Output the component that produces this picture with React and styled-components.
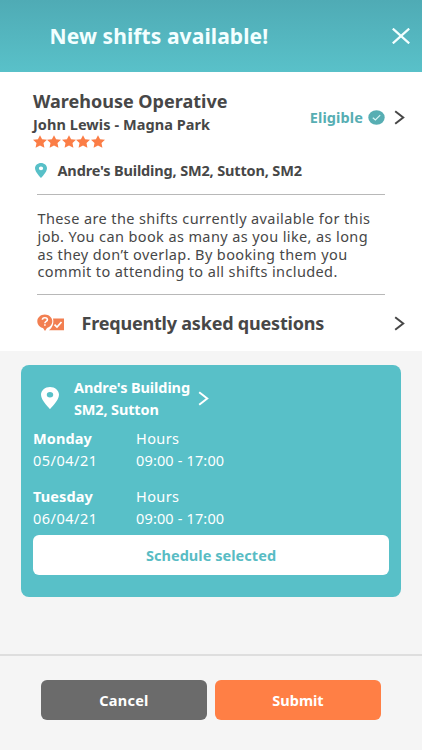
import React from "react";
import styled, { createGlobalStyle } from "styled-components";

const GlobalStyle = createGlobalStyle`
  * {
    box-sizing: border-box;
  }
  body {
    margin: 0;
    background-color: #f5f5f5;
    font-family: "Noto Sans", "Open Sans", sans-serif;
    color: #474747;
  }
`;

const Container = styled.div`
  display: flex;
  flex-direction: column;
  width: 422px;
  height: 750px;
  overflow: hidden;
`;

const Header = styled.header`
  display: flex;
  align-items: center;
  justify-content: space-between;
  height: 72px;
  padding: 0 12px 0 49.5px;
  background: linear-gradient(#4fabb5, #59c1c9);
  color: #f3ffff;
  flex-shrink: 0;
`;

const Text = styled.span`
  display: block;
  font-size: ${({ $size }) => $size || 14.5}px;
  font-weight: ${({ $weight }) => $weight || 700};
  line-height: ${({ $line }) => $line || 22}px;
  letter-spacing: ${({ $spacing }) => $spacing || 0}px;
  color: ${({ $color }) => $color || "inherit"};
  white-space: nowrap;
`;

const Details = styled.section`
  height: 279px;
  padding: 16px 17px 0 33px;
  background-color: white;
  flex-shrink: 0;
`;

const Job = styled.div`
  display: flex;
  align-items: flex-start;
  justify-content: space-between;
  height: 62px;
`;

const Stars = styled.div`
  display: flex;
  gap: 0.4px;
`;

const Status = styled.div`
  display: flex;
  align-items: center;
  padding-top: 18px;
`;

const StatusIcons = styled.div`
  display: flex;
  align-items: center;
  gap: 9px;
  margin-left: 5px;
`;

const Address = styled.div`
  display: flex;
  align-items: center;
  gap: 10.5px;
  height: 22px;
  margin-top: 9px;
  padding-left: 2px;
`;

const Divider = styled.hr`
  width: 348px;
  height: 1px;
  margin: ${({ $top }) => $top}px 0 0 4px;
  border: none;
  background-color: #b8b8b8;
`;

const Description = styled.p`
  width: 342px;
  margin: 15px 0 0 4.5px;
  font-size: 14.5px;
  line-height: 17.8px;
  letter-spacing: 0.39px;
`;

const Faq = styled.div`
  display: flex;
  align-items: center;
  height: 28px;
  margin-top: 14px;
  padding-left: 4px;

  > :last-child {
    margin-left: auto;
  }
`;

const FaqTitle = styled(Text)`
  margin-left: 16.5px;
`;

const Card = styled.section`
  width: 380px;
  height: 232px;
  margin: 14px 0 0 21px;
  padding: 11px 12px 0;
  border-radius: 8px;
  background-color: #58c0c8;
  color: white;
  flex-shrink: 0;
`;

const Place = styled.div`
  display: flex;
  align-items: center;
  height: 44px;
  padding-left: 8px;
`;

const PlaceName = styled.div`
  width: 117px;
  margin: 0 7px 0 15px;
`;

const Shift = styled.div`
  display: grid;
  grid-template-columns: 103px 1fr;
  margin-top: ${({ $top }) => $top}px;
`;

const Button = styled.button`
  display: flex;
  align-items: center;
  justify-content: center;
  width: ${({ $width }) => $width}px;
  height: 40px;
  padding: 0;
  border: none;
  border-radius: 6px;
  background-color: ${({ $bg }) => $bg};
  color: ${({ $color }) => $color || "white"};
  font-family: inherit;
`;

const ScheduleButton = styled(Button)`
  margin-top: 6px;
`;

const Footer = styled.footer`
  display: flex;
  gap: 8px;
  height: 96px;
  margin-top: auto;
  padding: 24px 0 0 41px;
  border-top: 2px solid #dedede;
`;

const Chevron = ({ color = "#474747" }) => (
  <svg width="11" height="15" viewBox="0 0 11 15" fill="none">
    <path d="M1.2 1.3 L9.2 7.5 L1.2 13.7" stroke={color} strokeWidth="2" />
  </svg>
);

const Close = () => (
  <svg width="18" height="16" viewBox="0 0 18 16" fill="none">
    <path d="M0.8 0.6 L17.2 15.4 M17.2 0.6 L0.8 15.4" stroke="#f3ffff" strokeWidth="2.2" />
  </svg>
);

const Star = () => (
  <svg width="14" height="13" viewBox="0 0 14 13">
    <path
      d="M7 0.2 L9.1 4.3 L14 4.8 L10.5 8 L11.4 12.8 L7 10.4 L2.6 12.8 L3.5 8 L0 4.8 L4.9 4.3 Z"
      fill="#fb7d46"
    />
  </svg>
);

const Pin = ({ width, height, color }) => (
  <svg width={width} height={height} viewBox="5 2 14 20" preserveAspectRatio="none">
    <path
      d="M12 2C8.1 2 5 5.1 5 9c0 5.2 7 13 7 13s7-7.8 7-13c0-3.9-3.1-7-7-7zm0 9.5a2.5 2.5 0 1 1 0-5 2.5 2.5 0 0 1 0 5z"
      fill={color}
    />
  </svg>
);

const Check = () => (
  <svg width="17" height="15" viewBox="0 0 17 15" fill="none">
    <ellipse cx="8.5" cy="7.5" rx="8.2" ry="7.3" fill="#57aeb3" />
    <path d="M4.8 7.7 L7.4 10 L12.2 5.2" stroke="#d8f5f5" strokeWidth="1.2" />
  </svg>
);

const FaqIcon = () => (
  <svg width="28" height="18" viewBox="0 0 28 18" fill="none">
    <path d="M16 4.5 H27 V16.3 H12 C15.2 14 17.2 9.5 16 4.5 Z" fill="#f27f51" />
    <path d="M17.5 10.6 L20 13 L24.5 8" stroke="white" strokeWidth="1.7" />
    <path
      d="M7.8 0.6 C3.8 0.6 0.3 3.5 0.3 7.3 C0.3 10.8 3 13.5 6 14 L8 16.9 L10 13.9 C13 13 15.3 10.5 15.3 7.3 C15.3 3.5 11.8 0.6 7.8 0.6 Z"
      fill="#f27f51"
    />
    <path
      d="M5.4 5.8 C5.4 3 10.4 3 10.4 5.8 C10.4 7.4 7.9 7.3 7.9 9.2 M7.9 10.2 V11.8"
      stroke="white"
      strokeWidth="1.6"
    />
  </svg>
);

const shifts = [
  { day: "Monday", date: "05/04/21", hours: "09:00 - 17:00", top: 7 },
  { day: "Tuesday", date: "06/04/21", hours: "09:00 - 17:00", top: 14 },
];

const App = () => {
  return (
    <Container>
      <GlobalStyle />
      <Header>
        <Text $size={21} $line={30} $spacing={0.1}>New shifts available!</Text>
        <Close />
      </Header>
      <Details>
        <Job>
          <div>
            <Text $size={18} $line={26}>Warehouse Operative</Text>
            <Text $line={21} $spacing={0.06}>John Lewis - Magna Park</Text>
            <Stars>
              {[1, 2, 3, 4, 5].map((n) => (
                <Star key={n} />
              ))}
            </Stars>
          </div>
          <Status>
            <Text $color="#57aeb3" $spacing={0.1}>Eligible</Text>
            <StatusIcons>
              <Check />
              <Chevron />
            </StatusIcons>
          </Status>
        </Job>
        <Address>
          <Pin width={12} height={15} color="#58c0c8" />
          <Text $spacing={-0.16}>Andre's Building, SM2, Sutton, SM2</Text>
        </Address>
        <Divider $top={13} />
        <Description>
          These are the shifts currently available for this job. You can book as
          many as you like, as long as they don’t overlap. By booking them you
          commit to attending to all shifts included.
        </Description>
        <Divider $top={13} />
        <Faq>
          <FaqIcon />
          <FaqTitle $size={18} $line={28} $spacing={-0.2}>Frequently asked questions</FaqTitle>
          <Chevron />
        </Faq>
      </Details>
      <Card>
        <Place>
          <Pin width={18} height={22} color="white" />
          <PlaceName>
            <Text $spacing={-0.1}>Andre's Building</Text>
            <Text $spacing={-0.15}>SM2, Sutton</Text>
          </PlaceName>
          <Chevron color="white" />
        </Place>
        {shifts.map(({ day, date, hours, top }) => (
          <Shift key={day} $top={top}>
            <Text $spacing={0.1}>{day}</Text>
            <Text $weight={400} $spacing={0.4}>Hours</Text>
            <Text $weight={400} $spacing={0.5}>{date}</Text>
            <Text $weight={400} $spacing={0.15}>{hours}</Text>
          </Shift>
        ))}
        <ScheduleButton $width={356} $bg="white" $color="#58bcc4">
          <Text $spacing={0.05}>Schedule selected</Text>
        </ScheduleButton>
      </Card>
      <Footer>
        <Button $width={166} $bg="#6b6b6b">
          <Text $spacing={0.25}>Cancel</Text>
        </Button>
        <Button $width={166} $bg="#ff7f45">
          <Text>Submit</Text>
        </Button>
      </Footer>
    </Container>
  );
};

export default App;
